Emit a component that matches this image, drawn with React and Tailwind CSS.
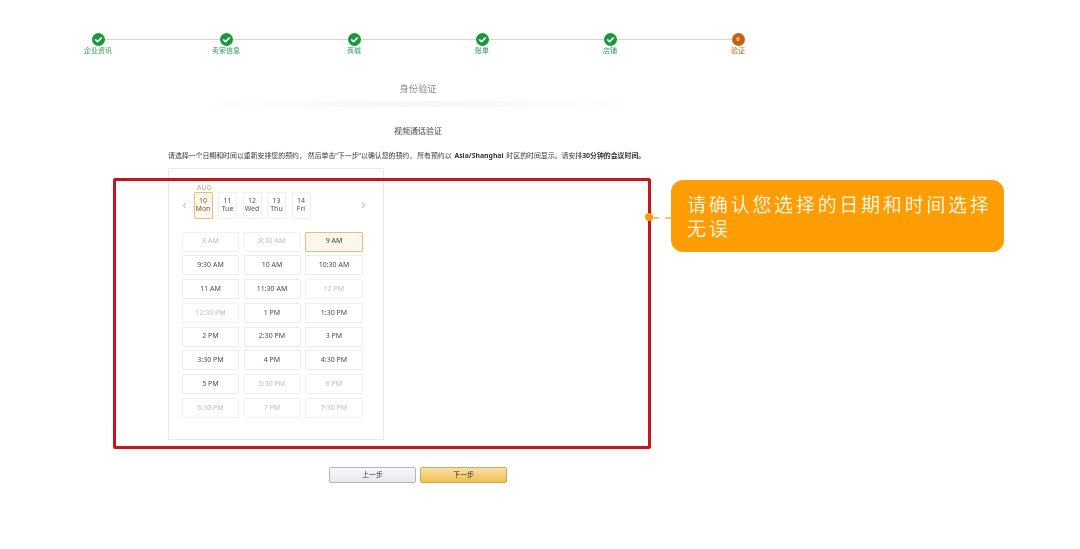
import React from "react";

const FONT = "[font-family:'Noto_Sans','Noto_Sans_CJK_SC',sans-serif]";

const steps = [
  { label: "企业资讯" },
  { label: "卖家信息" },
  { label: "商城" },
  { label: "账单" },
  { label: "店铺" },
  { label: "验证", current: true },
];

const dates = [
  { d: "10", w: "Mon", on: true },
  { d: "11", w: "Tue" },
  { d: "12", w: "Wed" },
  { d: "13", w: "Thu" },
  { d: "14", w: "Fri" },
];

const times = [
  ["8 AM", "off"], ["8:30 AM", "off"], ["9 AM", "on"],
  ["9:30 AM"], ["10 AM"], ["10:30 AM"],
  ["11 AM"], ["11:30 AM"], ["12 PM", "off"],
  ["12:30 PM", "off"], ["1 PM"], ["1:30 PM"],
  ["2 PM"], ["2:30 PM"], ["3 PM"],
  ["3:30 PM"], ["4 PM"], ["4:30 PM"],
  ["5 PM"], ["5:30 PM", "off"], ["6 PM", "off"],
  ["6:30 PM", "off"], ["7 PM", "off"], ["7:30 PM", "off"],
];

function Check() {
  return (
    <svg viewBox="0 0 13 13" className="w-[13px] h-[13px]">
      <circle cx="6.5" cy="6.5" r="6.5" fill="#159a3c" />
      <path d="M3.6 6.8 5.6 8.6 9.4 4.9" fill="none" stroke="#fff" strokeWidth="1.6" strokeLinecap="round" strokeLinejoin="round" />
    </svg>
  );
}

function Stepper() {
  return (
    <div className="pt-[33px] w-[768px] ml-[34px]">
      <div className="flex items-center w-[653px] ml-[57.5px] h-[13px]">
        {steps.map((s, i) => (
          <React.Fragment key={s.label}>
            {s.current ? (
              <div className="w-[13px] h-[13px] rounded-full bg-[#c4620f] text-[#f5d9bd] text-[6px] font-bold flex items-center justify-center shrink-0">6</div>
            ) : (
              <div className="shrink-0"><Check /></div>
            )}
            {i < steps.length - 1 && <div className="flex-1 h-px bg-[#d4d4d4]" />}
          </React.Fragment>
        ))}
      </div>
      <div className="grid grid-cols-6 mt-[-0.5px]">
        {steps.map((s) => (
          <div key={s.label} className={`text-center text-[7px] leading-[10px] ${s.current ? "text-[#b8691f]" : "text-[#2f9e55]"}`}>
            {s.label}
          </div>
        ))}
      </div>
    </div>
  );
}

function Calendar() {
  return (
    <div className="w-[216px] h-[272px] border border-[#e9e9e9] rounded-[1px] ml-[168px] mt-[6px] pt-[14px] px-[13px]">
      <div className="text-[7px] leading-[10px] text-[#d9a25e] ml-[15px]">AUG</div>
      <div className="flex items-center h-[27px] -mt-[1px]">
        <svg viewBox="0 0 6 8" className="w-[5px] h-[7px] mr-[6.5px]">
          <path d="M4.5 1 1.5 4l3 3" fill="none" stroke="#9a9a9a" strokeWidth="1" />
        </svg>
        <div className="flex gap-[5.5px]">
          {dates.map((x) => (
            <div
              key={x.d}
              className={`w-[19px] h-[27px] border rounded-[1px] flex flex-col items-center justify-center text-[7px] leading-[8px] ${x.on ? "border-[#e3bd82] bg-[#fdf6ea] text-[#6b5a44]" : "border-[#efefef] text-[#555555]"}`}
            >
              <span>{x.d}</span>
              <span>{x.w}</span>
            </div>
          ))}
        </div>
        <svg viewBox="0 0 6 8" className="w-[5px] h-[7px] ml-[50px]">
          <path d="M1.5 1l3 3-3 3" fill="none" stroke="#9a9a9a" strokeWidth="1" />
        </svg>
      </div>
      <div className="grid grid-cols-[57px_57px_58px] gap-x-[4.5px] gap-y-[3.8px] mt-[13px]">
        {times.map(([t, st]) => (
          <div
            key={t}
            className={`h-[20px] border rounded-[1px] flex items-center justify-center text-[7px] ${
              st === "on"
                ? "border-[#e3bd82] bg-[#fdf6ea] text-[#444444]"
                : st === "off"
                ? "border-[#f1f1f1] text-[#bdbdbd]"
                : "border-[#ececec] text-[#4a4a4a]"
            }`}
          >
            {t}
          </div>
        ))}
      </div>
    </div>
  );
}

export default function App() {
  return (
    <div className={`relative w-[1080px] h-[549px] bg-white overflow-hidden ${FONT}`}>
      <div className="w-[836px] blur-[0.6px]">
        <Stepper />
        <div className="mt-[26px] text-center text-[9.25px] leading-[14px] text-[#8a8a8a]">身份验证</div>
        <div className="mt-[5px] mx-[200px] h-[6px] bg-gradient-to-r from-transparent via-[#f5f5f5] to-transparent" />
        <div className="mt-[18px] text-center text-[8px] leading-[12px] text-[#444444]">视频通话验证</div>
        <div className="mt-[13px] ml-[168px] w-[520px] text-[6.9px] leading-[12px] text-[#333333] whitespace-nowrap [word-spacing:1px]">
          请选择一个日期和时间以重新安排您的预约，<span className="ml-[2px]">然后单击“下一步”以确认您的预约，</span><span className="ml-[1px]">所有预约以</span> <b>Asia/Shanghai</b> 时区的时间显示。请安排<b>30分钟的会议时间。</b>
        </div>
        <Calendar />
        <div className="flex gap-[4px] ml-[329px] mt-[27px]">
          <div className="w-[87px] h-[16px] rounded-[2px] border border-[#b5b5b5] bg-gradient-to-b from-[#f7f8fa] to-[#e7e9ec] text-[7px] leading-[14px] text-center text-[#333333]">上一步</div>
          <div className="w-[87px] h-[16px] rounded-[2px] border border-[#c9a95a] bg-gradient-to-b from-[#f7dfa5] to-[#f0c14b] text-[7px] leading-[14px] text-center text-[#333333]">下一步</div>
        </div>
      </div>

      <div className="absolute left-[113px] top-[178px] w-[538px] h-[271px] border-[3px] border-[#c4161d] rounded-[2px] blur-[0.3px]" />
      <div className="absolute left-[645px] top-[213px] w-[8px] h-[8px] rounded-full bg-[#fb9a0b]" />
      <div className="absolute left-[653px] top-[217px] w-[18px] border-t-2 border-dashed border-[#f8c47a]" />
      <div className="absolute left-[671px] top-[180px] w-[333px] h-[72px] rounded-[12px] bg-[#fe9c03] text-[#fff4e0] text-[19px] leading-[24px] tracking-[2.75px] pl-[16px] pr-[8px] pt-[13px] blur-[0.3px]">
        请确认您选择的日期和时间选择无误
      </div>
    </div>
  );
}
